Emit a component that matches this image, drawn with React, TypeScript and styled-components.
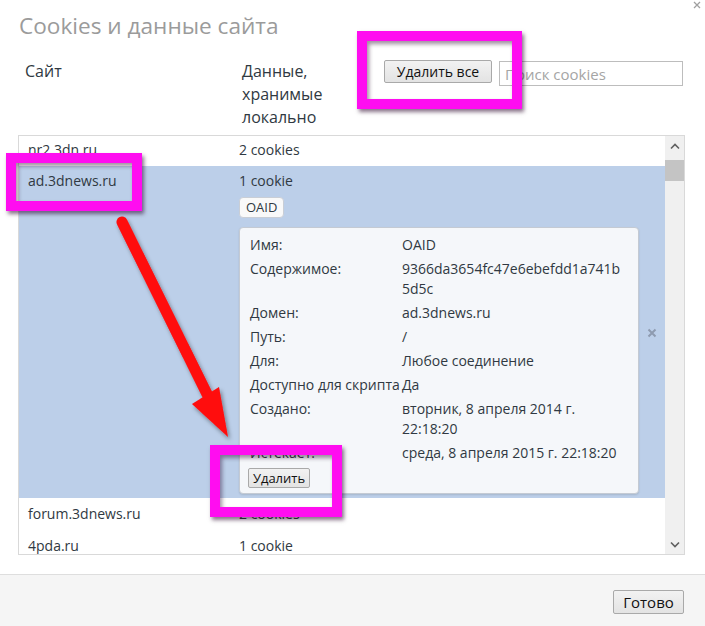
import React from "react";
import styled, { createGlobalStyle } from "styled-components";

const GlobalStyle = createGlobalStyle`
  html, body {
    margin: 0;
    padding: 0;
    background: #ffffff;
  }
  body {
    font-family: "Open Sans", "Noto Sans", sans-serif;
    color: #303942;
  }
`;

const Dialog = styled.div`
  position: relative;
  width: 705px;
  height: 626px;
  display: flex;
  flex-direction: column;
  background: #ffffff;
  overflow: hidden;
`;

const TitleBar = styled.div`
  display: flex;
  justify-content: space-between;
  align-items: flex-start;
  height: 51px;
  padding-left: 19px;
  box-sizing: border-box;
`;

const Title = styled.h1`
  margin: 11px 0 0;
  font-size: 22.6px;
  font-weight: 400;
  line-height: 30px;
  color: #9b9b9b;
`;

const CloseIcon = styled.svg`
  margin: 1px 4px 0 0;
  flex: none;
`;

const ColumnsRow = styled.div`
  display: flex;
  align-items: flex-start;
  margin-top: 9px;
  padding-left: 25px;
  height: 69px;
`;

const HeaderCell = styled.div<{ $width: number }>`
  width: ${({ $width }) => $width}px;
  flex: none;
  font-size: 16px;
  line-height: 23px;
  color: #303942;
`;

const HeaderText = styled.span`
  display: block;
  width: 100px;
`;

const PushButton = styled.button<{ $width: number; $height: number; $size: number }>`
  width: ${({ $width }) => $width}px;
  height: ${({ $height }) => $height}px;
  flex: none;
  padding: 0;
  border: 1px solid #a9a9a9;
  border-radius: 2px;
  background: linear-gradient(#f2f2f2, #e3e3e3);
  font-family: "Open Sans", "Noto Sans", sans-serif;
  font-size: ${({ $size }) => $size}px;
  color: #111111;
  line-height: 1;
  box-sizing: border-box;
`;

const SearchInput = styled.input`
  width: 184px;
  height: 25px;
  margin: 1px 0 0 7px;
  padding: 0 5px;
  border: 1px solid #bdbdbd;
  font-family: "Open Sans", "Noto Sans", sans-serif;
  font-size: 15px;
  color: #303942;
  box-sizing: border-box;
  outline: none;
  &::placeholder {
    color: #a5a5a5;
  }
`;

const ListBox = styled.div`
  display: flex;
  width: 667px;
  height: 420px;
  margin: 6px 0 0 18px;
  border: 1px solid #d9d9d9;
  box-sizing: border-box;
`;

const ListBody = styled.div`
  flex: 1;
  overflow: hidden;
`;

const ListScroll = styled.div`
  margin-top: -2px;
`;

const Row = styled.div<{ $selected?: boolean }>`
  display: flex;
  align-items: flex-start;
  background: ${({ $selected }) => ($selected ? "#bccfe9" : "transparent")};
  padding: ${({ $selected }) => ($selected ? "5px 0 4px" : "6px 0")};
  font-size: 14px;
  line-height: 20px;
`;

const SiteCell = styled.div`
  width: 220px;
  flex: none;
  padding-left: 9px;
  box-sizing: border-box;
  color: #303942;
`;

const DataCell = styled.div`
  width: 400px;
  flex: none;
`;

const RemoveCell = styled.div`
  flex: 1;
  align-self: center;
  display: flex;
  justify-content: center;
`;

const Chip = styled.div`
  display: inline-block;
  margin-top: 6px;
  height: 21px;
  padding: 0 6px;
  border: 1px solid #c9ced6;
  border-radius: 4px;
  background: #f9f9f9;
  font-size: 13px;
  line-height: 19px;
  box-sizing: border-box;
`;

const Card = styled.div`
  margin-top: 9px;
  padding: 7px 10px 5px;
  border: 1px solid #c4cad3;
  border-radius: 4px;
  background: #f5f7fa;
  box-shadow: 0 1px 2px rgba(0, 0, 0, 0.12);
`;

const DetailGrid = styled.div`
  display: grid;
  grid-template-columns: 152px 1fr;
  row-gap: 4px;
`;

const Label = styled.div`
  white-space: nowrap;
`;

const Value = styled.div`
  word-break: break-all;
`;

const DateValue = styled.div`
  word-break: normal;
`;

const SmallButton = styled(PushButton)`
  display: block;
  margin: 5px 0 0 -2px;
`;

const Scrollbar = styled.div`
  width: 19px;
  flex: none;
  display: flex;
  flex-direction: column;
  background: #f0f0f0;
`;

const ScrollArrow = styled.div`
  height: 20px;
  display: flex;
  align-items: center;
  justify-content: center;
`;

const Thumb = styled.div`
  height: 21px;
  margin-top: 4px;
  background: #c4c4c4;
`;

const Track = styled.div`
  flex: 1;
`;

const Footer = styled.div`
  flex: 1;
  display: flex;
  justify-content: flex-end;
  align-items: flex-start;
  margin-top: 19px;
  padding: 15px 21px 0 0;
  border-top: 1px solid #dedede;
  background: #f5f5f5;
`;

const Highlight = styled.div<{ $x: number; $y: number; $w: number; $h: number }>`
  position: absolute;
  left: ${({ $x }) => $x}px;
  top: ${({ $y }) => $y}px;
  width: ${({ $w }) => $w}px;
  height: ${({ $h }) => $h}px;
  border: 10px solid #ff0df0;
  box-sizing: border-box;
  box-shadow: 2px 3px 4px rgba(40, 0, 40, 0.55), inset 2px 3px 4px rgba(40, 0, 40, 0.45);
  pointer-events: none;
`;

const ArrowLayer = styled.svg`
  position: absolute;
  left: 0;
  top: 0;
  pointer-events: none;
`;

const Chevron = ({ down }: { down?: boolean }) => (
  <svg width="10" height="7" viewBox="0 0 10 7">
    <polyline
      points={down ? "1,1.5 5,5.5 9,1.5" : "1,5.5 5,1.5 9,5.5"}
      fill="none"
      stroke="#606060"
      strokeWidth="1.6"
    />
  </svg>
);

const details: { label: string; value: string; date?: boolean }[] = [
  { label: "Имя:", value: "OAID" },
  { label: "Содержимое:", value: "9366da3654fc47e6ebefdd1a741b5d5c" },
  { label: "Домен:", value: "ad.3dnews.ru" },
  { label: "Путь:", value: "/" },
  { label: "Для:", value: "Любое соединение" },
  { label: "Доступно для скрипта", value: "Да" },
  { label: "Создано:", value: "вторник, 8 апреля 2014 г. 22:18:20", date: true },
  { label: "Истекает:", value: "среда, 8 апреля 2015 г. 22:18:20", date: true },
];

const App = () => {
  return (
    <>
      <GlobalStyle />
      <Dialog>
        <TitleBar>
          <Title>Cookies и данные сайта</Title>
          <CloseIcon width="8" height="8" viewBox="0 0 8 8">
            <path d="M1 1 L7 7 M7 1 L1 7" stroke="#a0a0a0" strokeWidth="1.3" />
          </CloseIcon>
        </TitleBar>

        <ColumnsRow>
          <HeaderCell $width={217}>Сайт</HeaderCell>
          <HeaderCell $width={142}>
            <HeaderText>Данные, хранимые локально</HeaderText>
          </HeaderCell>
          <PushButton $width={108} $height={23} $size={14}>
            Удалить все
          </PushButton>
          <SearchInput placeholder="Поиск cookies" />
        </ColumnsRow>

        <ListBox>
          <ListBody>
            <ListScroll>
              <Row>
                <SiteCell>nr2.3dn.ru</SiteCell>
                <DataCell>2 cookies</DataCell>
              </Row>
              <Row $selected>
                <SiteCell>ad.3dnews.ru</SiteCell>
                <DataCell>
                  <div>1 cookie</div>
                  <Chip>OAID</Chip>
                  <Card>
                    <DetailGrid>
                      {details.map((d) => (
                        <React.Fragment key={d.label}>
                          <Label>{d.label}</Label>
                          {d.date ? (
                            <DateValue>{d.value}</DateValue>
                          ) : (
                            <Value>{d.value}</Value>
                          )}
                        </React.Fragment>
                      ))}
                    </DetailGrid>
                    <SmallButton $width={62} $height={20} $size={13}>
                      Удалить
                    </SmallButton>
                  </Card>
                </DataCell>
                <RemoveCell>
                  <svg width="10" height="10" viewBox="0 0 10 10">
                    <path d="M1.5 1.5 L8.5 8.5 M8.5 1.5 L1.5 8.5" stroke="#8e9bb0" strokeWidth="2" />
                  </svg>
                </RemoveCell>
              </Row>
              <Row>
                <SiteCell>forum.3dnews.ru</SiteCell>
                <DataCell>2 cookies</DataCell>
              </Row>
              <Row>
                <SiteCell>4pda.ru</SiteCell>
                <DataCell>1 cookie</DataCell>
              </Row>
            </ListScroll>
          </ListBody>
          <Scrollbar>
            <ScrollArrow>
              <Chevron />
            </ScrollArrow>
            <Thumb />
            <Track />
            <ScrollArrow>
              <Chevron down />
            </ScrollArrow>
          </Scrollbar>
        </ListBox>

        <Footer>
          <PushButton $width={71} $height={24} $size={15}>
            Готово
          </PushButton>
        </Footer>

        <Highlight $x={357} $y={31} $w={165} $h={78} />
        <Highlight $x={6} $y={153} $w={136} $h={58} />
        <Highlight $x={210} $y={445} $w={132} $h={72} />

        <ArrowLayer width="705" height="626" viewBox="0 0 705 626">
          <defs>
            <filter id="arrowShadow" x="-20%" y="-20%" width="140%" height="140%">
              <feDropShadow dx="2" dy="3" stdDeviation="2" floodColor="#000" floodOpacity="0.4" />
            </filter>
          </defs>
          <g filter="url(#arrowShadow)">
            <line x1="122" y1="222" x2="207" y2="394" stroke="#ff0a0a" strokeWidth="11" strokeLinecap="round" />
            <polygon points="192,404 219,387 228,437" fill="#ff0a0a" />
          </g>
        </ArrowLayer>
      </Dialog>
    </>
  );
};

export default App;
